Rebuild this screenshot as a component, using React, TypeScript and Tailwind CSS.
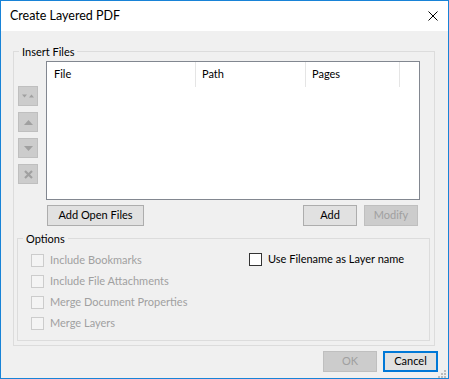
import React from "react";

const font = "font-['Lato','Liberation_Sans',sans-serif] text-[11px]";

function SideButton({ children }: { children: React.ReactNode }) {
  return (
    <div className="flex h-[20px] w-[20px] items-center justify-center border border-[#bfbfbf] bg-[#cccccc]">
      {children}
    </div>
  );
}

function PushButton({
  label,
  width,
  disabled,
  focused,
}: {
  label: string;
  width: string;
  disabled?: boolean;
  focused?: boolean;
}) {
  let cls = "flex h-[21px] items-center justify-center ";
  if (disabled) cls += "border border-[#bfbfbf] bg-[#cccccc] text-[#a0a0a0]";
  else if (focused) cls += "border-2 border-[#0078d7] bg-[#e1e1e1] text-black";
  else cls += "border border-[#adadad] bg-[#e1e1e1] text-black";
  return <div className={cls + " " + width}>{label}</div>;
}

function Check({ label, disabled }: { label: string; disabled?: boolean }) {
  return (
    <div className="flex h-[21px] items-center">
      <span
        className={
          disabled
            ? "h-[13px] w-[13px] shrink-0 border border-[#cccccc] bg-[#f4f4f4]"
            : "h-[13px] w-[13px] shrink-0 border border-[#333333] bg-white"
        }
      />
      <span className={"ml-[6px] " + (disabled ? "text-[#a0a0a0]" : "text-black")}>{label}</span>
    </div>
  );
}

export default function App() {
  return (
    <div className={"flex h-[379px] w-[449px] flex-col border border-[#1883d7] bg-[#f0f0f0] " + font}>
      {/* title bar */}
      <div className="flex h-[30px] shrink-0 items-center justify-between bg-white pl-[9px] pr-[10px]">
        <span className="text-[12.5px] text-black">Create Layered PDF</span>
        <svg width="10" height="10" viewBox="0 0 10 10">
          <path d="M0.5 0.5 L9.5 9.5 M9.5 0.5 L0.5 9.5" stroke="#000" strokeWidth="1" />
        </svg>
      </div>

      <div className="relative flex flex-1 flex-col pt-[12px]">
        <fieldset className="ml-[12px] h-[303px] w-[422px] border border-[#dcdcdc]">
          <legend className="ml-[5px] px-[3px] leading-[17px] text-black">Insert Files</legend>

          <div className="flex items-start pt-[1px]">
            <div className="ml-[4px] mt-[25px] flex flex-col gap-[6px]">
              <SideButton>
                <svg width="12" height="5" viewBox="0 0 12 5">
                  <path d="M0 0.5 L5 0.5 L2.5 3.5 Z M7 3.5 L12 3.5 L9.5 0.5 Z" fill="#a0a0a0" />
                </svg>
              </SideButton>
              <SideButton>
                <svg width="9" height="5" viewBox="0 0 9 5">
                  <path d="M0 5 L9 5 L4.5 0 Z" fill="#a0a0a0" />
                </svg>
              </SideButton>
              <SideButton>
                <svg width="9" height="5" viewBox="0 0 9 5">
                  <path d="M0 0 L9 0 L4.5 5 Z" fill="#a0a0a0" />
                </svg>
              </SideButton>
              <SideButton>
                <svg width="9" height="9" viewBox="0 0 9 9">
                  <path d="M1 1 L8 8 M8 1 L1 8" stroke="#a0a0a0" strokeWidth="2.2" />
                </svg>
              </SideButton>
            </div>

            <div className="ml-[8px] h-[139px] w-[374px] border border-[#828790] bg-white">
              <div className="flex h-[25px] text-black">
                <div className="flex w-[149px] items-center border-r border-[#e5e5e5] pl-[7px]">File</div>
                <div className="flex w-[110px] items-center border-r border-[#e5e5e5] pl-[6px]">Path</div>
                <div className="flex w-[94px] items-center border-r border-[#e5e5e5] pl-[6px]">Pages</div>
              </div>
            </div>
          </div>

          <div className="mt-[5px] flex items-center">
            <PushButton label="Add Open Files" width="ml-[33px] w-[97px]" />
            <PushButton label="Add" width="ml-auto w-[54px]" />
            <PushButton label="Modify" width="ml-[7px] mr-[16px] w-[54px]" disabled />
          </div>

          <fieldset className="ml-[3px] mt-[4px] h-[111px] w-[413px] border border-[#dcdcdc]">
            <legend className="ml-[5px] px-[3px] leading-[17px] text-black">Options</legend>
            <div className="flex pt-[3px]">
              <div className="ml-[13px] flex w-[218px] flex-col">
                <Check label="Include Bookmarks" disabled />
                <Check label="Include File Attachments" disabled />
                <Check label="Merge Document Properties" disabled />
                <Check label="Merge Layers" disabled />
              </div>
              <div className="-mt-[1px] flex flex-col">
                <Check label="Use Filename as Layer name" />
              </div>
            </div>
          </fieldset>
        </fieldset>

        <div className="mt-[5px] flex justify-end gap-[6px] pr-[10px]">
          <PushButton label="OK" width="w-[54px]" disabled />
          <PushButton label="Cancel" width="w-[55px]" focused />
        </div>

        <svg className="absolute bottom-0 right-[2px]" width="8" height="9" viewBox="0 0 8 9">
          <g fill="#bcbcbc">
            <rect x="6" y="1" width="2" height="2" />
            <rect x="3" y="4" width="2" height="2" />
            <rect x="6" y="4" width="2" height="2" />
            <rect x="0" y="7" width="2" height="2" />
            <rect x="3" y="7" width="2" height="2" />
            <rect x="6" y="7" width="2" height="2" />
          </g>
        </svg>
      </div>
    </div>
  );
}
